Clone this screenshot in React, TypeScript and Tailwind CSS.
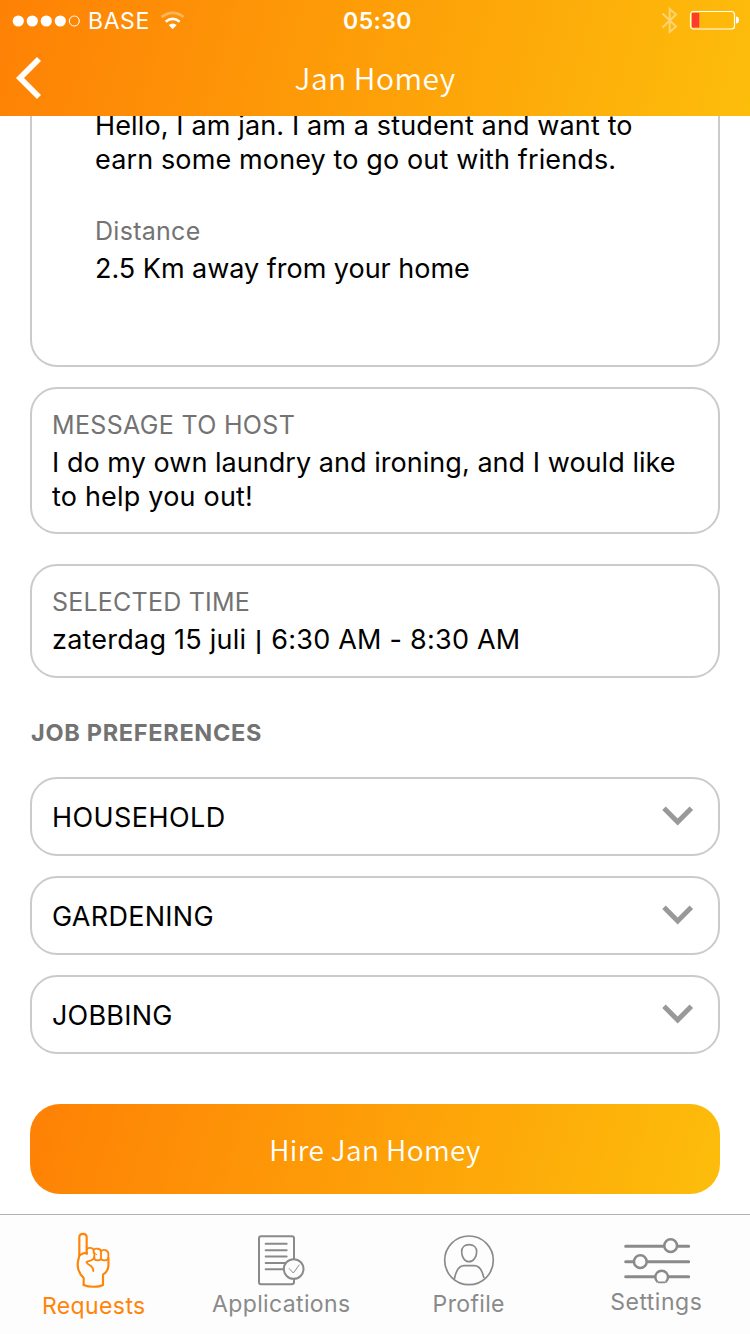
import type { ReactNode } from "react";

function Wifi() {
  return (
    <svg className="ml-[10px] h-[20px] w-[26px]" viewBox="479 31 78 60" fill="none" stroke="#fff">
      <path d="M484 49Q517 24 550 49" strokeWidth="8" opacity="0.35" />
      <path d="M496 63Q517 46 538 63" strokeWidth="8" />
      <path d="M505 73Q517 64 529 73L517 86Z" fill="#fff" stroke="none" />
    </svg>
  );
}

function StatusBar() {
  return (
    <div className="grid h-[41px] grid-cols-3 items-center text-[23px] leading-[28px] tracking-[0.6px]">
      <div className="flex items-center pl-[12px]">
        <svg className="h-[14px] w-[69px]" viewBox="0 0 69 14" fill="#fff">
          <circle cx="6.3" cy="7" r="5.6" />
          <circle cx="20.3" cy="7" r="5.6" />
          <circle cx="34.3" cy="7" r="5.6" />
          <circle cx="48.3" cy="7" r="5.6" />
          <circle cx="62.3" cy="7" r="5" fill="none" stroke="#fff" strokeWidth="1" />
        </svg>
        <span className="ml-[7px]">BASE</span>
        <Wifi />
      </div>
      <div className="pl-[5px] text-center font-semibold tracking-[0.4px]">05:30</div>
      <div className="flex items-center justify-end pr-[10px]">
        <svg className="h-[27px] w-[17px]" viewBox="0 0 17 27" fill="none" stroke="#fff" strokeWidth="2" opacity="0.42">
          <path d="M1.5 6.5L15 19.5L8.7 25V2L15 7.5L1.5 20.5" />
        </svg>
        <svg className="mb-px ml-[11px] h-[20px] w-[51px]" viewBox="0 0 51 20" fill="none">
          <rect x="1.5" y="1.5" width="44" height="17.500" rx="3" stroke="#fff" strokeWidth="1.2" />
          <rect x="3" y="3" width="7.2" height="14.500" fill="#ff3b30" />
          <path d="M47 6.5Q50 6.8 50 10Q50 13.2 47 13.5Z" fill="#fff" />
        </svg>
      </div>
    </div>
  );
}

function Header() {
  return (
    <header className="h-[116px] shrink-0 bg-[linear-gradient(105deg,#fe8105,#fdbd0b)] text-white">
      <StatusBar />
      <div className="grid h-[75px] grid-cols-[60px_1fr_60px] items-center">
        <svg className="mb-px ml-[15px] h-[44px] w-[28px]" viewBox="45 169 84 132" fill="none" stroke="#fff" strokeWidth="17">
          <path d="M117 178L60 235L117 292" />
        </svg>
        <h1 className="mb-[3px] text-center font-['Noto_Sans_CJK_SC',sans-serif] text-[30px] leading-[40px] font-[350] tracking-[0.45px]">Jan Homey</h1>
      </div>
    </header>
  );
}

function Card({ children, className }: { children: ReactNode; className: string }) {
  return <section className={`rounded-[27px] border-2 border-[#cbcbcb] px-[20px] pt-[20px] ${className}`}>{children}</section>;
}

function Label({ children, className = "" }: { children: ReactNode; className?: string }) {
  return <div className={`mb-[5px] text-[25px] leading-[32px] text-[#737373] ${className}`}>{children}</div>;
}

function Row({ name, className }: { name: string; className: string }) {
  return (
    <div className="flex h-[79px] items-center justify-between rounded-[27px] border-2 border-[#cbcbcb] pr-[24px] pl-[20px]">
      <span className={`pt-[2px] ${className}`}>{name}</span>
      <svg className="mb-px h-[20px] w-[32px]" viewBox="305 139 96 60" fill="none" stroke="#999" strokeWidth="15">
        <path d="M311 146L352 187L393 146" />
      </svg>
    </div>
  );
}

function HandIcon() {
  return (
    <svg className="ml-[2px] h-[60px] w-[40px]" viewBox="24 14 120 180" fill="none" stroke="#ff8408" strokeWidth="6.5" strokeLinejoin="round" strokeLinecap="round">
      <path d="M50 179V158C38 146 32 135 32 118C32 104 37 96 37 90V36C37 22 59 22 59 36V86" />
      <path d="M37 90C46 84 52 82 60 83" />
      <path d="M59 73C61 65 80 66 80 76V82M80 75C84 67 102 69 102 79V103M82 82V99C82 107 102 107 102 99M102 78C108 70 123 74 124 84V98C123 107 103 107 102 99" strokeWidth="5.5" />
      <path d="M81 96C81 104 72 106 63 108L58 110C61 117 68 119 72 122C78 127 79 132 79 137" strokeWidth="5.5" />
      <path d="M124 98C125 119 127 136 108 148V179C95 186 65 186 50 179" />
      <path d="M83 84L89 88" strokeWidth="3" />
    </svg>
  );
}

function DocumentIcon() {
  return (
    <svg className="h-[52px] w-[48px]" viewBox="771 87 144 156" fill="none" stroke="#8a8a8a" strokeWidth="6" strokeLinecap="round" strokeLinejoin="round">
      <path d="M882 161V100Q882 94 876 94H783Q777 94 777 100V232Q777 238 783 238H874Q882 238 882 232V223" />
      <path d="M797 116H860M797 135.500H860M797 154.500H860M797 174H854M797 192.500H848" />
      <circle cx="881" cy="192" r="29.500" />
      <path d="M867 190L880 204L898 179" strokeWidth="3" strokeLinecap="butt" />
    </svg>
  );
}

function ProfileIcon() {
  return (
    <svg className="h-[52px] w-[52px]" viewBox="204 87 156 156" fill="none" stroke="#8a8a8a" strokeWidth="5">
      <circle cx="282" cy="166" r="73" />
      <path d="M282 119C269 119 260 127 260 140C260 156 269 170 282 170C295 170 305 156 305 140C305 127 296 119 282 119Z" />
      <path d="M238 222C243 197 250 182 267 182H298C315 182 322 197 327 219" />
    </svg>
  );
}

function SlidersIcon() {
  return (
    <svg className="ml-[2px] h-[48px] w-[68px]" viewBox="744 95 204 144" fill="none" stroke="#8a8a8a" strokeWidth="9" strokeLinecap="round">
      <path d="M752 123H866M908 123H941M752 169H775M817 169H941M752 214H839M881 214H941" />
      <circle cx="887" cy="121" r="19" strokeWidth="7.500" />
      <circle cx="796" cy="169" r="19" strokeWidth="7.500" />
      <path d="M848 230A19 19 0 1 1 872 230" strokeWidth="7.500" strokeLinecap="butt" />
      <path d="M850 231H870" strokeWidth="5" />
    </svg>
  );
}

function Tab({ icon, label, className }: { icon: ReactNode; label: string; className: string }) {
  return (
    <div className={`flex flex-col items-center text-[23px] leading-[28px] ${className}`}>
      {icon}
      <span>{label}</span>
    </div>
  );
}

export default function App() {
  return (
    <div className="flex h-[1334px] w-[750px] flex-col overflow-hidden bg-white font-['Inter',sans-serif] text-[27px] leading-[34px] whitespace-nowrap text-black">
      <Header />
      <main className="flex h-[1098px] shrink-0 flex-col overflow-hidden px-[30px]">
        <section className="h-[251px] shrink-0 overflow-hidden rounded-b-[27px] border-2 border-t-0 border-[#cbcbcb] pl-[63px]">
          <p className="-mt-[7px]">
            <span className="tracking-[0.13px]">Hello, I am jan. I am a student and want to</span>
            <br />
            <span className="tracking-[0.13px]">earn some money to go out with friends.</span>
          </p>
          <Label className="mt-[38px] tracking-[0.28px]">Distance</Label>
          <p className="tracking-[-0.02px]">2.5 Km away from your home</p>
        </section>
        <div className="mt-[20px] flex flex-col gap-[30px]">
          <Card className="pb-[18px]">
            <Label className="tracking-[0.33px]">MESSAGE TO HOST</Label>
            <p>
              <span className="tracking-[0.04px]">I do my own laundry and ironing, and I would like</span>
              <br />
              <span className="tracking-[0.2px]">to help you out!</span>
            </p>
          </Card>
          <Card className="pb-[19px]">
            <Label className="tracking-[0.22px]">SELECTED TIME</Label>
            <p className="tracking-[0.23px]">
              zaterdag 15 juli <span className="mx-px text-[20px] leading-none font-semibold">|</span> 6:30 AM - 8:30 AM
            </p>
          </Card>
        </div>
        <h2 className="mt-[39px] pl-px text-[23.5px] leading-[32px] font-bold tracking-[0.7px] text-[#737373]">JOB PREFERENCES</h2>
        <div className="mt-[28px] flex flex-col gap-[20px]">
          <Row name="HOUSEHOLD" className="tracking-[0.42px]" />
          <Row name="GARDENING" className="tracking-[0.28px]" />
          <Row name="JOBBING" className="tracking-[0.2px]" />
        </div>
        <button className="mt-[50px] h-[90px] shrink-0 rounded-[30px] bg-[linear-gradient(105deg,#fe8105,#fdbd0b)] text-center font-['Noto_Sans_CJK_SC',sans-serif] text-[28px] font-[350] tracking-[0.4px] text-white">
          Hire Jan Homey
        </button>
      </main>
      <nav className="grid h-[120px] shrink-0 grid-cols-4 border-t border-[#b2b2b2] bg-[#fdfdfd] text-[#8a8a8a]">
        <Tab icon={<HandIcon />} label="Requests" className="pt-[15px] tracking-[0.4px] text-[#ff8408] [&>span]:mt-[2px]" />
        <Tab icon={<DocumentIcon />} label="Applications" className="pt-[19px] tracking-[0.35px] [&>span]:mt-[4px]" />
        <Tab icon={<ProfileIcon />} label="Profile" className="pt-[19px] tracking-[0.35px] [&>span]:mt-[4px]" />
        <Tab icon={<SlidersIcon />} label="Settings" className="pt-[22px] tracking-[0.5px] [&>span]:mt-[3px]" />
      </nav>
    </div>
  );
}
